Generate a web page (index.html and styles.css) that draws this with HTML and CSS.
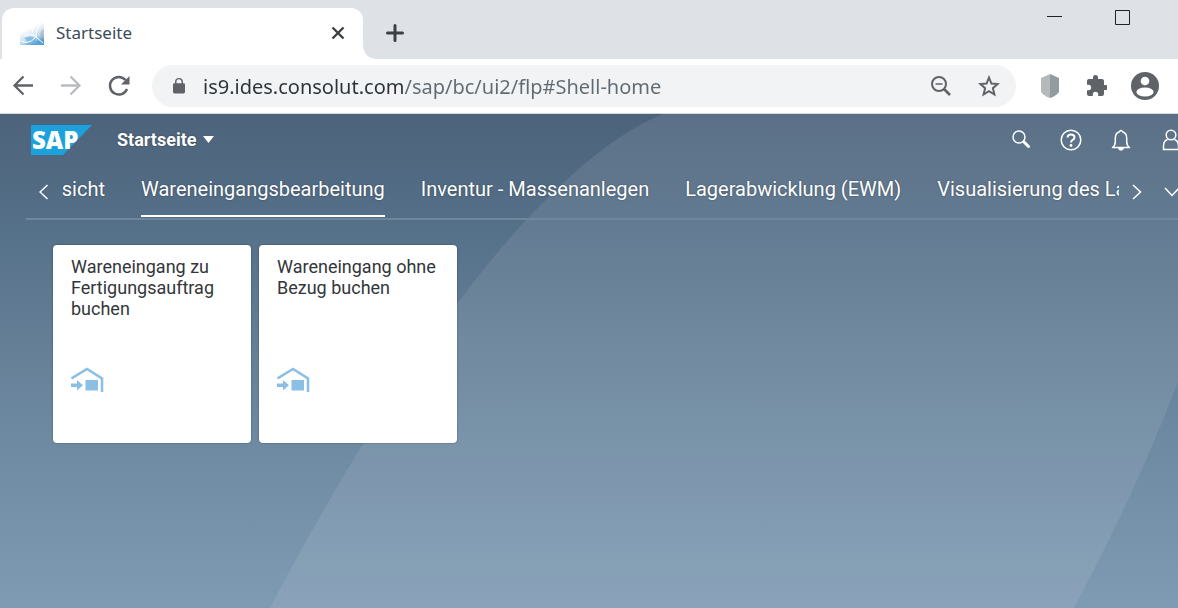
FILE: index.html
```html
<!DOCTYPE html>
<html lang="de">
<head>
    <meta charset="UTF-8">
    <meta name="viewport" content="width=device-width, initial-scale=1.0">
    <title>Startseite</title>
    <link rel="stylesheet" href="styles.css">
</head>
<body>
    <div class="tab-strip">
        <div class="browser-tab">
            <svg class="favicon" viewBox="0 0 24 24" aria-hidden="true">
                <defs>
                    <linearGradient id="fav" x1="0" y1="0" x2="0.5" y2="1">
                        <stop offset="0.4" stop-color="#ffffff"/>
                        <stop offset="0.8" stop-color="#bcd8ec"/>
                        <stop offset="1" stop-color="#5a9fd0"/>
                    </linearGradient>
                </defs>
                <path fill="url(#fav)" d="M0 6L24 0v24H0z"/>
                <path fill="#a9b2bb" opacity=".6" d="M24 8v10l-4-3 1-5z"/>
                <path fill="#6fb1df" opacity=".7" d="M4 17q6-3 10 0l3 6H5q4-3-1-6z"/>
                <path fill="none" stroke="#fff" d="M4 15q8-3 12 1l7 6M13 6q-2 6 3 10M20 4q-5 6-4 12M1 20q7 4 14-3"/>
            </svg>
            <span class="tab-title">Startseite</span>
            <button class="plain" aria-label="Tab schließen">
                <svg width="14" height="14" viewBox="0 0 14 14"><path fill="none" stroke="#3c4043" stroke-width="2.4" d="M1.500 1.500l11 11M12.500 1.500l-11 11"/></svg>
            </button>
        </div>
        <button class="plain new-tab" aria-label="Neuer Tab">
            <svg width="18" height="18" viewBox="0 0 18 18"><path fill="none" stroke="#3c4043" stroke-width="3" stroke-linecap="round" d="M9 1.500v15M1.500 9h15"/></svg>
        </button>
        <div class="window-buttons">
            <button class="plain" aria-label="Minimieren">
                <svg width="16" height="16" viewBox="0 0 16 16"><path fill="none" stroke="#222" d="M0 7.500h15"/></svg>
            </button>
            <button class="plain" aria-label="Maximieren">
                <svg width="16" height="16" viewBox="0 0 16 16"><path fill="none" stroke="#222" d="M.5 1.500h14v14H.5z"/></svg>
            </button>
        </div>
    </div>

    <div class="toolbar">
        <div class="nav-buttons">
            <button class="plain" aria-label="Zurück">
                <svg width="22" height="22" viewBox="0 0 22 22"><path fill="none" stroke="#5f6368" stroke-width="2.300" d="M21 10.500H2.500M11.500 1.500l-9 9 9 9"/></svg>
            </button>
            <button class="plain" aria-label="Vorwärts">
                <svg width="22" height="22" viewBox="0 0 22 22"><path fill="none" stroke="#babcbe" stroke-width="2.300" d="M1 10.500h18.500M10.500 1.500l9 9-9 9"/></svg>
            </button>
            <button class="plain" aria-label="Neu laden">
                <svg width="22" height="22" viewBox="0 0 22 22"><path fill="none" stroke="#5f6368" stroke-width="2.500" d="M19 14A8.800 8.800 0 1 1 17.500 5"/><path fill="#5f6368" d="M21.500 1v8.500H13z"/></svg>
            </button>
        </div>
        <div class="address-bar">
            <svg class="lock" width="12" height="18" viewBox="0 0 13 18"><rect y="6" width="13" height="11" rx="1.500" fill="#5f6368"/><path fill="none" stroke="#5f6368" stroke-width="1.600" d="M3 7V4.500a3.500 3.500 0 0 1 7 0V7"/></svg>
            <input class="url" type="text" aria-label="Adresse" value="is9.ides.consolut.com/sap/bc/ui2/flp#Shell-home">
            <button class="plain" aria-label="Zoom">
                <svg width="22" height="22" viewBox="0 0 22 22"><circle cx="9" cy="9" r="7" fill="none" stroke="#5f6368" stroke-width="2"/><path fill="none" stroke="#5f6368" stroke-width="2.600" d="M14 14l6 6"/><path stroke="#5f6368" stroke-width="1.500" d="M5.500 9h7"/></svg>
            </button>
            <button class="plain" aria-label="Lesezeichen">
                <svg width="22" height="22" viewBox="0 0 22 22"><path fill="none" stroke="#5f6368" stroke-width="2" d="M11 2.500l2.400 6 6.300.5-4.800 4.200 1.500 6.300L11 16.200l-5.400 3.300 1.500-6.300L2.300 9l6.300-.5z"/></svg>
            </button>
        </div>
        <div class="extensions">
            <button class="plain" aria-label="Schutz">
                <svg width="18" height="24" viewBox="0 0 18 24"><path fill="#b4b9ba" d="M9 0L0 4v14q3 4 9 6z"/><path fill="#939b9f" d="M9 0l9 4v14q-3 4-9 6z"/></svg>
            </button>
            <button class="plain" aria-label="Erweiterungen">
                <svg width="24" height="24" viewBox="0 0 24 24"><path fill="#5f6368" transform="translate(2)" d="M20.500 11H19V7c0-1.100-.9-2-2-2h-4V3.500a2.500 2.500 0 0 0-5 0V5H4c-1.100 0-2 .9-2 2v3.800h1.500a2.700 2.700 0 0 1 0 5.400H2V20c0 1.100.9 2 2 2h3.800v-1.500a2.700 2.700 0 0 1 5.400 0V22H17c1.100 0 2-.9 2-2v-4h1.500a2.500 2.500 0 0 0 0-5z"/></svg>
            </button>
            <button class="plain" aria-label="Profil">
                <svg width="28" height="28" viewBox="0 0 28 28"><circle cx="14" cy="14" r="14" fill="#5f6368"/><circle cx="14" cy="9" r="4.300" fill="#fff"/><ellipse cx="14" cy="20" rx="8.600" ry="4.500" fill="#fff"/></svg>
            </button>
        </div>
    </div>

    <div class="shell">
        <svg class="shell-bg" viewBox="0 0 1178 494" preserveAspectRatio="none" aria-hidden="true">
            <path fill="#fff" fill-opacity=".085" d="M663 0C610 22 568 63 527 105Q490 145 457 190Q360 322 270 494H1074Q1135 380 1178 268V0z"/>
        </svg>

        <header class="shell-header">
            <a class="logo" href="#" aria-label="SAP">
                <svg width="61" height="30" viewBox="0 0 61 30"><path fill="#1ba1dc" d="M0 0h61L32 30H0z"/><text class="logo-text" x="1" y="24">SAP</text></svg>
            </a>
            <button class="plain shell-title">Startseite
                <svg width="11" height="7" viewBox="0 0 11 7"><path fill="#fff" d="M0 0h11L5.500 7z"/></svg>
            </button>
            <div class="shell-actions">
                <button class="plain" aria-label="Suchen">
                    <svg width="22" height="22" viewBox="0 0 22 22"><circle cx="9" cy="8" r="6" fill="none" stroke="#fff" stroke-width="1.500"/><path stroke="#fff" stroke-width="3" stroke-linecap="round" d="M14 13l4.500 4.500"/></svg>
                </button>
                <button class="plain" aria-label="Hilfe">
                    <svg width="22" height="22" viewBox="0 0 22 22"><circle cx="11" cy="11" r="9.800" fill="none" stroke="#fff" stroke-width="1.500"/><path fill="none" stroke="#fff" stroke-width="2" d="M7.500 8.500q.2-3 3.500-3t3.500 2.700q0 1.600-1.700 2.600T11 13.500"/><circle cx="11" cy="16.500" r="1.400" fill="#fff"/></svg>
                </button>
                <button class="plain" aria-label="Mitteilungen">
                    <svg width="22" height="22" viewBox="0 0 22 22"><path fill="none" stroke="#fff" stroke-width="1.500" stroke-linejoin="round" d="M2.500 18.500q2.800-2 2.800-6V9q0-5 4.200-6.300Q11 .5 12.500 2.700 16.700 4 16.700 9v3.500q0 4 2.800 6z"/><path fill="#fff" d="M8 19h6q-.5 2.700-3 2.700T8 19z"/></svg>
                </button>
                <button class="plain" aria-label="Benutzer">
                    <svg width="18" height="22" viewBox="0 0 18 22"><circle cx="9" cy="6" r="4.800" fill="none" stroke="#fff" stroke-width="1.500"/><path fill="none" stroke="#fff" stroke-width="1.500" d="M5.500 10.500Q1.500 12 1.500 17v3.500h15V17q0-5-4-6.500"/></svg>
                </button>
            </div>
        </header>

        <nav class="group-bar">
            <button class="plain" aria-label="Vorherige Gruppe">
                <svg width="10" height="16" viewBox="0 0 10 16"><path fill="none" stroke="#fff" stroke-width="1.500" d="M8.500 1L1 8l7.500 7"/></svg>
            </button>
            <div class="groups">
                <a class="group group-cut" href="#">Übersicht</a>
                <a class="group selected" href="#">Wareneingangsbearbeitung</a>
                <a class="group" href="#">Inventur - Massenanlegen</a>
                <a class="group" href="#">Lagerabwicklung (EWM)</a>
                <a class="group" href="#">Visualisierung des Lagers</a>
            </div>
            <button class="plain" aria-label="Nächste Gruppe">
                <svg width="10" height="16" viewBox="0 0 10 16"><path fill="none" stroke="#fff" stroke-width="1.500" d="M1 1l7.500 7L1 15"/></svg>
            </button>
            <button class="plain group-menu" aria-label="Alle Gruppen">
                <svg width="16" height="10" viewBox="0 0 16 10"><path fill="none" stroke="#fff" stroke-width="1.500" d="M1 1l7 7.500L15 1"/></svg>
            </button>
        </nav>

        <main class="tiles">
            <a class="tile" href="#">
                <span class="tile-title">Wareneingang zu Fertigungsauftrag buchen</span>
                <svg class="tile-icon" width="33" height="26" viewBox="0 0 33 26"><path fill="none" stroke="#8bbfe6" stroke-width="2.600" d="M.5 11.500L16 2l15 9.500V25"/><path fill="#8bbfe6" d="M14.500 13H27v10.500H14.500zM0 16.500h6V13l6 5.200-6 5.300V20H0z"/></svg>
            </a>
            <a class="tile" href="#">
                <span class="tile-title">Wareneingang ohne Bezug buchen</span>
                <svg class="tile-icon" width="33" height="26" viewBox="0 0 33 26"><path fill="none" stroke="#8bbfe6" stroke-width="2.600" d="M.5 11.500L16 2l15 9.500V25"/><path fill="#8bbfe6" d="M14.500 13H27v10.500H14.500zM0 16.500h6V13l6 5.200-6 5.300V20H0z"/></svg>
            </a>
        </main>
    </div>
</body>
</html>
```

FILE: styles.css
```css
* {
    box-sizing: border-box;
}
body {
    margin: 0;
    min-height: 100vh;
    display: flex;
    flex-direction: column;
    overflow: hidden;
    font-family: Roboto, "Liberation Sans", sans-serif;
}
a {
    color: inherit;
    text-decoration: none;
}
svg {
    display: block;
}
.plain {
    display: flex;
    align-items: center;
    justify-content: center;
    flex: none;
    margin: 0;
    padding: 0;
    border: none;
    background: none;
    color: inherit;
    font: inherit;
    cursor: pointer;
}

/* Browser frame */
.tab-strip {
    display: flex;
    height: 59px;
    padding: 8px 0 0 2px;
    background: #dee1e6;
}
.browser-tab {
    position: relative;
    display: flex;
    align-items: center;
    width: 361px;
    padding: 0 18px 2px;
    background: #fff;
    border-radius: 12px 12px 0 0;
}
.browser-tab::after {
    content: "";
    position: absolute;
    left: 100%;
    bottom: 0;
    width: 12px;
    height: 12px;
    background: radial-gradient(circle at 100% 0, transparent 11px, #fff 12px);
}
.favicon {
    width: 24px;
    height: 24px;
    margin-right: 12px;
}
.tab-title {
    flex: 1;
    font-family: "Noto Sans", sans-serif;
    font-size: 17px;
    color: #3c4b57;
}
.new-tab {
    margin-left: 23px;
    padding-bottom: 2px;
}
.window-buttons {
    display: flex;
    align-items: flex-start;
    gap: 52px;
    margin-left: auto;
    padding: 1px 47px 0 0;
}
.toolbar {
    display: flex;
    align-items: center;
    height: 55px;
    padding: 0 19px 0 12px;
    border-bottom: 1px solid #d5d8dc;
    background: #fff;
}
.nav-buttons {
    display: flex;
    gap: 26px;
    margin-right: 22px;
}
.address-bar {
    display: flex;
    align-items: center;
    flex: 1;
    gap: 26px;
    height: 42px;
    padding: 0 16px 0 21px;
    border-radius: 21px;
    background: #f1f3f4;
}
.url {
    flex: 1;
    min-width: 0;
    margin-left: -8px;
    padding: 0;
    border: none;
    outline: none;
    font-family: "Noto Sans", sans-serif;
    font-size: 20px;
    /* host name dark, path grey */
    color: transparent;
    background: linear-gradient(to right, #2b3238 201px, #5f6a73 201px);
    background-clip: text;
    -webkit-background-clip: text;
}
.extensions {
    display: flex;
    align-items: center;
    gap: 24px;
    margin-left: 25px;
}

/* Launchpad */
.shell {
    position: relative;
    flex: 1;
    color: #fff;
    background: linear-gradient(#4c637b, #56718a 25%, #668198 50%, #708ca5 70%, #7f9bb4);
}
.shell-bg {
    position: absolute;
    inset: 0;
    width: 100%;
    height: 100%;
}
.shell-header,
.group-bar,
.tiles {
    position: relative;
    display: flex;
}
.shell-header {
    align-items: center;
    height: 51px;
    margin-right: -18px;
    padding-left: 31px;
}
.logo-text {
    font-family: "Open Sans", sans-serif;
    font-size: 24px;
    font-weight: 800;
    fill: #fff;
}
.shell-title {
    gap: 7px;
    margin-left: 25px;
    font-size: 18px;
    font-weight: 700;
    text-shadow: 0 0 2px rgba(0, 0, 0, 0.4);
}
.shell-actions {
    display: flex;
    margin-left: auto;
}
.shell-actions .plain {
    width: 50px;
}
.group-bar {
    gap: 13px;
    height: 55px;
    margin: 0 -2px 0 26px;
    padding-left: 13px;
    border-bottom: 2px solid #70869d;
}
.groups {
    display: flex;
    flex: 1;
    gap: 36px;
    height: 52px;
    overflow: hidden;
}
.group {
    flex: none;
    font-size: 20px;
    line-height: 48px;
    white-space: nowrap;
    text-shadow: 0 0 2px rgba(0, 0, 0, 0.4);
}
.group-cut {
    display: flex;
    justify-content: flex-end;
    width: 43px;
    overflow: hidden;
}
.selected {
    border-bottom: 2px solid #fff;
}
.group-menu {
    margin-left: 9px;
}
.tiles {
    gap: 8px;
    padding: 25px 53px;
}
.tile {
    display: flex;
    flex-direction: column;
    width: 198px;
    height: 198px;
    padding: 11px 18px 50px;
    border-radius: 4px;
    background: #fff;
    box-shadow: 0 0 2px rgba(0, 0, 0, 0.4);
    color: #32363a;
}
.tile-title {
    font-size: 18px;
    line-height: 21px;
}
.tile-icon {
    margin-top: auto;
}
```
